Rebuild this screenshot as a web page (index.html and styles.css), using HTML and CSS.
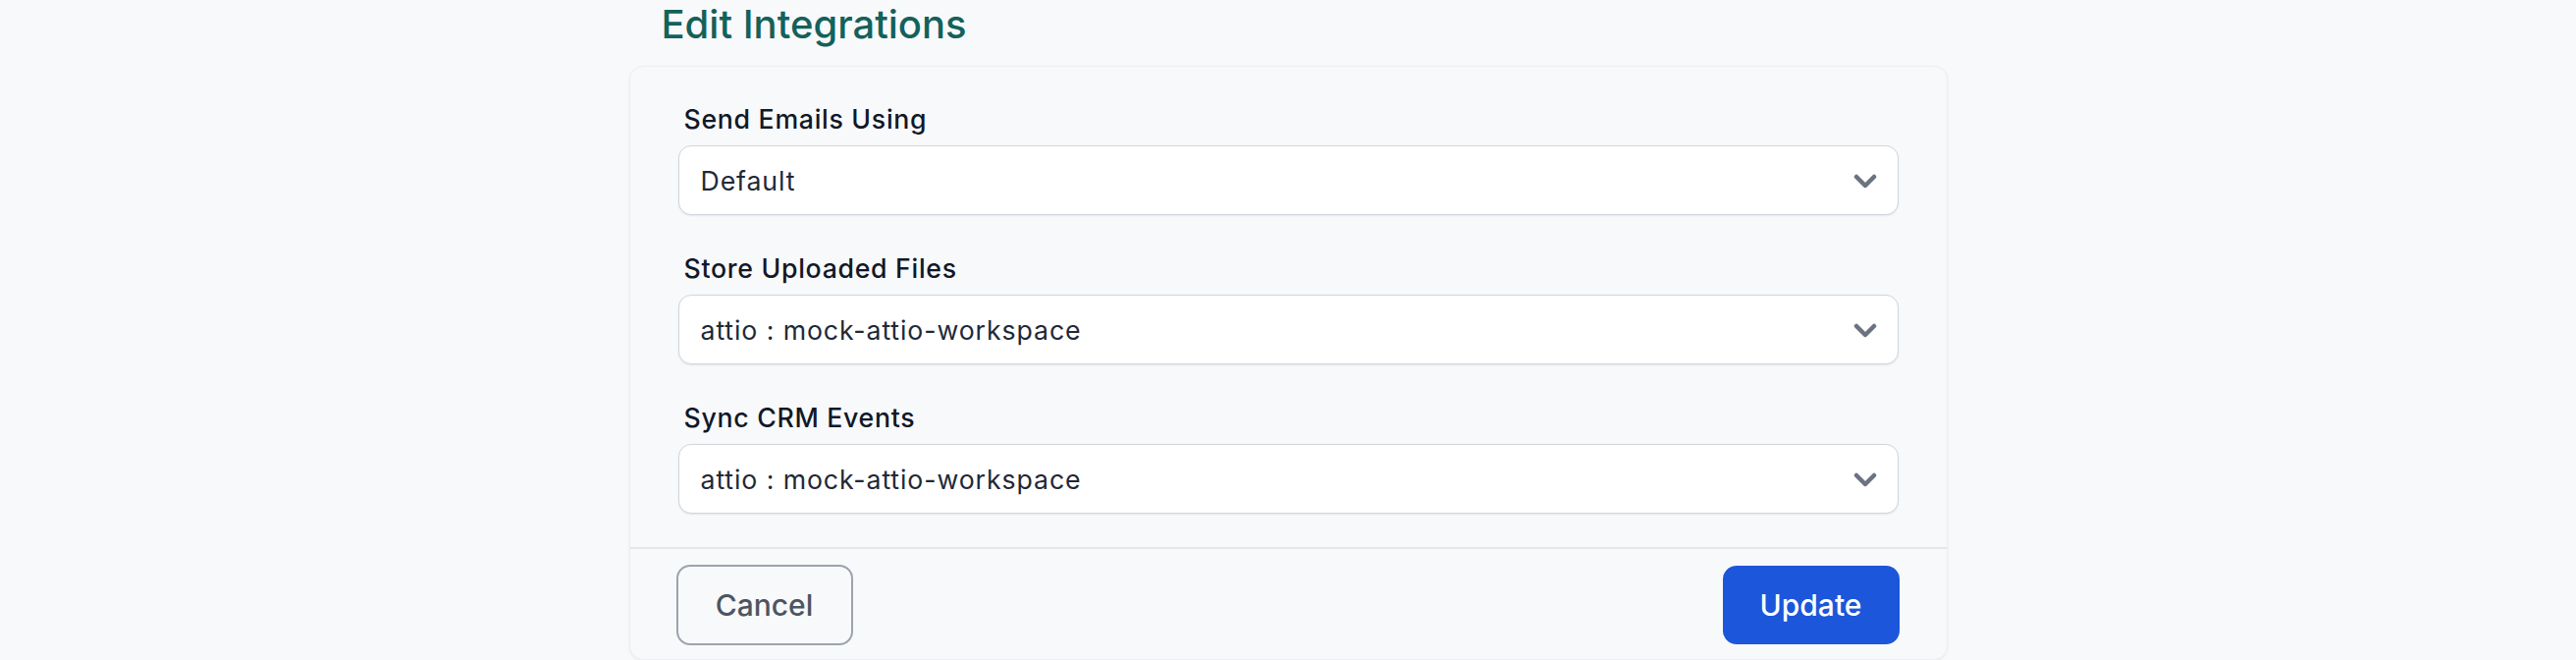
FILE: index.html
```html
<!DOCTYPE html>
<html lang="en">
<head>
  <meta charset="UTF-8">
  <meta name="viewport" content="width=device-width, initial-scale=1.0">
  <title>Edit Integrations</title>
  <link rel="stylesheet" href="styles.css">
</head>
<body>
  <main class="page">
    <h1 class="page-title">Edit Integrations</h1>

    <section class="card">
      <div class="card-body">
        <div class="field">
          <label class="field-label">Send Emails Using</label>
          <div class="select">
            <span class="select-value">Default</span>
            <svg class="chevron" viewBox="0 0 24 16"><polyline points="3,3 12,12 21,3"/></svg>
          </div>
        </div>

        <div class="field">
          <label class="field-label">Store Uploaded Files</label>
          <div class="select">
            <span class="select-value">attio : mock-attio-workspace</span>
            <svg class="chevron" viewBox="0 0 24 16"><polyline points="3,3 12,12 21,3"/></svg>
          </div>
        </div>

        <div class="field">
          <label class="field-label">Sync CRM Events</label>
          <div class="select">
            <span class="select-value">attio : mock-attio-workspace</span>
            <svg class="chevron" viewBox="0 0 24 16"><polyline points="3,3 12,12 21,3"/></svg>
          </div>
        </div>
      </div>

      <footer class="card-footer">
        <button class="btn btn-cancel">Cancel</button>
        <button class="btn btn-primary">Update</button>
      </footer>
    </section>
  </main>
</body>
</html>
```

FILE: styles.css
```css
body {
  margin: 0;
  padding: 0;
  background-color: #f8f9fb;
  font-family: Inter, "Noto Sans", sans-serif;
  color: #111827;
}

.page {
  width: 1343px;
  margin: 0 auto;
}

.page-title {
  margin: 1px 0 0;
  padding-left: 33px;
  font-size: 40px;
  line-height: 48px;
  font-weight: 500;
  color: #14615a;
}

.card {
  margin-top: 18px;
  background-color: #f8f9fb;
  border: 1px solid #eceef2;
  border-radius: 14px;
  box-shadow: 0 1px 3px rgba(0, 0, 0, 0.06);
}

.card-body {
  display: flex;
  flex-direction: column;
  gap: 34px;
  padding: 33px 49px 34px;
}

.field {
  display: flex;
  flex-direction: column;
  gap: 7px;
}

.field-label {
  padding-left: 6px;
  font-size: 26.7px;
  line-height: 40px;
  font-weight: 500;
  letter-spacing: 0.7px;
  color: #111827;
}

.select {
  display: flex;
  align-items: center;
  justify-content: space-between;
  height: 69px;
  padding: 0 21px 0 22px;
  background-color: #ffffff;
  border: 1px solid #d1d5db;
  border-radius: 13px;
  box-shadow: 0 1px 2px rgba(0, 0, 0, 0.08);
}

.select-value {
  font-size: 26.7px;
  letter-spacing: 0.9px;
  color: #1f2937;
}

.chevron {
  width: 24px;
  height: 16px;
  margin-top: 2px;
  fill: none;
  stroke: #6b7280;
  stroke-width: 4.5;
  stroke-linecap: round;
  stroke-linejoin: round;
}

.card-footer {
  display: flex;
  justify-content: space-between;
  align-items: center;
  padding: 16px 48px 14px 47px;
  border-top: 2px solid #e5e7eb;
}

.btn {
  height: 82px;
  width: 180px;
  border-radius: 14px;
  font-family: Inter, "Noto Sans", sans-serif;
  font-size: 30px;
  font-weight: 500;
  cursor: pointer;
}

.btn-cancel {
  background-color: #f8f9fb;
  border: 2px solid #9ca3af;
  color: #4b5563;
}

.btn-primary {
  height: 80px;
  background-color: #1c56da;
  border: none;
  color: #ffffff;
}
```
